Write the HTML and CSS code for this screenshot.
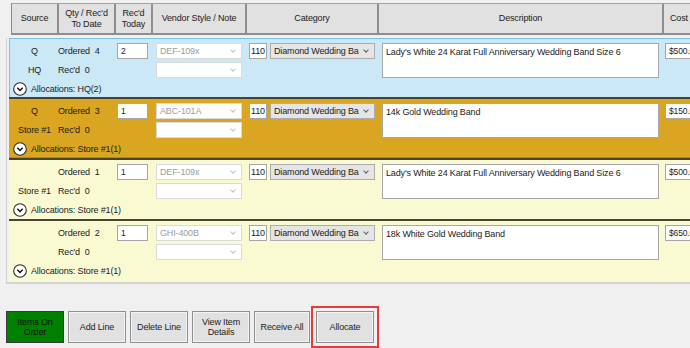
FILE: index.html
```html
<!DOCTYPE html>
<html lang="en">

<head>
    <meta charset="UTF-8">
    <title>Purchase Order Lines</title>
    <link rel="stylesheet" href="styles.css">
</head>

<body>
    <div class="page">

        <!-- Column headers -->
        <div class="head cols">
            <div class="hcell">Source</div>
            <div class="hcell">Qty / Rec'd<br>To Date</div>
            <div class="hcell">Rec'd<br>Today</div>
            <div class="hcell">Vendor Style / Note</div>
            <div class="hcell">Category</div>
            <div class="hcell">Description</div>
            <div class="hcell hcost">Cost</div>
        </div>

        <!-- Order lines -->
        <div class="list">

            <div class="line line-blue">
                <div class="cols">
                    <div class="src"><span>Q</span><span>HQ</span></div>
                    <div class="qty"><span>Ordered&nbsp; 4</span><span>Rec'd&nbsp; 0</span></div>
                    <div class="today"><div class="box">2</div></div>
                    <div class="vendor">
                        <div class="sel dis">DEF-109x</div>
                        <div class="sel dis"></div>
                    </div>
                    <div class="cat"><div class="box code">110</div><div class="sel cat-sel">Diamond Wedding Ba</div></div>
                    <div class="desc"><div class="area">Lady's White 24 Karat Full Anniversary Wedding Band Size 6</div></div>
                    <div class="cost"><div class="box">$500.00</div></div>
                </div>
                <div class="alloc">
                    <span class="toggle"><svg width="14" height="14" viewBox="0 0 14 14"><circle cx="7" cy="7" r="6.3" fill="#fff" stroke="#2b2b2b" stroke-width="1.1"/><path d="M4.3 5.8 L7 8.5 L9.7 5.8" fill="none" stroke="#111" stroke-width="1.5"/></svg></span>
                    Allocations: HQ(2)
                </div>
            </div>

            <div class="line line-gold">
                <div class="cols">
                    <div class="src"><span>Q</span><span>Store #1</span></div>
                    <div class="qty"><span>Ordered&nbsp; 3</span><span>Rec'd&nbsp; 0</span></div>
                    <div class="today"><div class="box">1</div></div>
                    <div class="vendor">
                        <div class="sel dis">ABC-101A</div>
                        <div class="sel dis"></div>
                    </div>
                    <div class="cat"><div class="box code">110</div><div class="sel cat-sel">Diamond Wedding Ba</div></div>
                    <div class="desc"><div class="area">14k Gold Wedding Band</div></div>
                    <div class="cost"><div class="box">$150.00</div></div>
                </div>
                <div class="alloc">
                    <span class="toggle"><svg width="14" height="14" viewBox="0 0 14 14"><circle cx="7" cy="7" r="6.3" fill="#fff" stroke="#2b2b2b" stroke-width="1.1"/><path d="M4.3 5.8 L7 8.5 L9.7 5.8" fill="none" stroke="#111" stroke-width="1.5"/></svg></span>
                    Allocations: Store #1(1)
                </div>
            </div>

            <div class="line line-pale">
                <div class="cols">
                    <div class="src"><span></span><span>Store #1</span></div>
                    <div class="qty"><span>Ordered&nbsp; 1</span><span>Rec'd&nbsp; 0</span></div>
                    <div class="today"><div class="box">1</div></div>
                    <div class="vendor">
                        <div class="sel dis">DEF-109x</div>
                        <div class="sel dis"></div>
                    </div>
                    <div class="cat"><div class="box code">110</div><div class="sel cat-sel">Diamond Wedding Ba</div></div>
                    <div class="desc"><div class="area">Lady's White 24 Karat Full Anniversary Wedding Band Size 6</div></div>
                    <div class="cost"><div class="box">$500.00</div></div>
                </div>
                <div class="alloc">
                    <span class="toggle"><svg width="14" height="14" viewBox="0 0 14 14"><circle cx="7" cy="7" r="6.3" fill="#fff" stroke="#2b2b2b" stroke-width="1.1"/><path d="M4.3 5.8 L7 8.5 L9.7 5.8" fill="none" stroke="#111" stroke-width="1.5"/></svg></span>
                    Allocations: Store #1(1)
                </div>
            </div>

            <div class="line line-pale last">
                <div class="cols">
                    <div class="src"><span></span><span></span></div>
                    <div class="qty"><span>Ordered&nbsp; 2</span><span>Rec'd&nbsp; 0</span></div>
                    <div class="today"><div class="box">1</div></div>
                    <div class="vendor">
                        <div class="sel dis">GHI-400B</div>
                        <div class="sel dis"></div>
                    </div>
                    <div class="cat"><div class="box code">110</div><div class="sel cat-sel">Diamond Wedding Ba</div></div>
                    <div class="desc"><div class="area">18k White Gold Wedding Band</div></div>
                    <div class="cost"><div class="box">$650.00</div></div>
                </div>
                <div class="alloc">
                    <span class="toggle"><svg width="14" height="14" viewBox="0 0 14 14"><circle cx="7" cy="7" r="6.3" fill="#fff" stroke="#2b2b2b" stroke-width="1.1"/><path d="M4.3 5.8 L7 8.5 L9.7 5.8" fill="none" stroke="#111" stroke-width="1.5"/></svg></span>
                    Allocations: Store #1(1)
                </div>
            </div>

        </div>

        <!-- Action buttons -->
        <div class="actions">
            <div class="btn btn-green">Items On<br>Order</div>
            <div class="btn">Add Line</div>
            <div class="btn">Delete Line</div>
            <div class="btn">View Item<br>Details</div>
            <div class="btn btn-narrow">Receive All</div>
            <div class="mark"><div class="btn">Allocate</div></div>
        </div>

    </div>
</body>

</html>
```

FILE: styles.css
```css
/* Reset */
* {
    margin: 0;
    padding: 0;
    box-sizing: border-box;
}

body {
    font-family: "Liberation Sans", Arial, sans-serif;
    font-size: 9px;
    letter-spacing: -0.15px;
    color: #1b1b1b;
    background-color: #f0f0f0;
    width: 690px;
    height: 348px;
    overflow: hidden;
}

.page {
    padding-top: 3px;
}

/* Shared column grid for header and lines */
.cols {
    display: grid;
    grid-template-columns: 47px 57px 37px 94px 132px 285px 60px;
}

/* Header */
.head {
    margin-left: 11px;
    width: 720px;
    height: 32px;
    background-color: #e1e1e1;
    border-top: 1px solid #a3a3a3;
    border-left: 1px solid #8a8a8a;
    border-bottom: 2px solid #8e8e8e;
}

.hcell {
    display: flex;
    align-items: center;
    justify-content: center;
    text-align: center;
    line-height: 11px;
    border-right: 2px solid #8e8e8e;
}

.hcost {
    justify-content: flex-start;
    padding-left: 6px;
}

/* List of lines */
.list {
    margin: 3px 0 0 6px;
    border-left: 1px solid #d2d2d2;
    border-bottom: 2px solid #d4d4d4;
    padding-left: 2px;
}

.line {
    height: 61px;
    border-bottom: 2px solid #46432e;
    padding-left: 2px;
}

.line.last {
    height: 61px;
    border-bottom: none;
}

.line-blue {
    background-color: #cbe8f6;
    border-top: 1px solid #79c0e8;
    box-shadow: inset 1px 0 0 #79c0e8;
    height: 61px;
}

.line-gold {
    background-color: #daa520;
    box-shadow: inset 0 -1px 0 #b8891a;
}

.line-pale {
    background-color: #fafad2;
}

.line .cols {
    padding-top: 4px;
}

.src,
.qty {
    display: flex;
    flex-direction: column;
    gap: 3px;
}

.src span,
.qty span {
    height: 16px;
    line-height: 16px;
}

.src {
    text-align: center;
}

.box {
    height: 16px;
    line-height: 14px;
    background-color: #fff;
    border: 1px solid #a6a6a6;
    padding-left: 3px;
    font-size: 8.5px;
}

.today .box {
    margin-left: 2px;
    width: 31px;
}

.vendor {
    display: flex;
    flex-direction: column;
    gap: 3px;
    padding-left: 4px;
}

.sel {
    position: relative;
    height: 16px;
    line-height: 14px;
    padding-left: 3px;
    border: 1px solid #acacac;
    white-space: nowrap;
    overflow: hidden;
}

.sel::after {
    content: "";
    position: absolute;
    right: 6px;
    top: 4px;
    width: 3px;
    height: 3px;
    border-right: 1px solid #606060;
    border-bottom: 1px solid #606060;
    transform: rotate(45deg);
}

.sel.dis {
    width: 86px;
    background-color: #fff;
    border-color: #dadada;
    color: #9d9d9d;
}

.sel.dis::after {
    border-color: #c2c2c2;
}

.cat {
    display: flex;
    gap: 3px;
    padding-left: 3px;
    align-items: flex-start;
}

.code {
    width: 18px;
    padding-left: 1px;
    font-size: 9px;
}

.cat-sel {
    width: 105px;
    background-color: #e5e5e5;
}

.desc .area {
    margin-left: 4px;
    width: 277px;
    height: 35px;
    background-color: #fff;
    border: 1px solid #a6a6a6;
    padding: 2px 3px;
    line-height: 12px;
}

.cost .box {
    margin-left: 2px;
    width: 50px;
    padding-left: 3px;
}

/* Allocation toggle */
.alloc {
    display: flex;
    align-items: center;
    gap: 4px;
    margin-top: 4px;
    padding-left: 2px;
    height: 14px;
}

.toggle {
    display: flex;
}

/* Buttons */
.actions {
    display: flex;
    gap: 4px;
    margin: 27px 0 0 6px;
    align-items: flex-start;
}

.btn {
    width: 58px;
    height: 32px;
    display: flex;
    align-items: center;
    justify-content: center;
    text-align: center;
    line-height: 10px;
    background-color: #e1e1e1;
    border: 1px solid #8f8f8f;
    box-shadow: inset 0 0 0 1px #f4f4f4;
}

.btn-narrow {
    width: 56px;
}

.btn-green {
    background-color: #008000;
    border-color: #3a3a3a;
    box-shadow: none;
    color: #111;
}

.mark {
    margin: -5px 0 0 -3px;
    padding: 3px;
    border: 2px solid #e53b3b;
}
```
